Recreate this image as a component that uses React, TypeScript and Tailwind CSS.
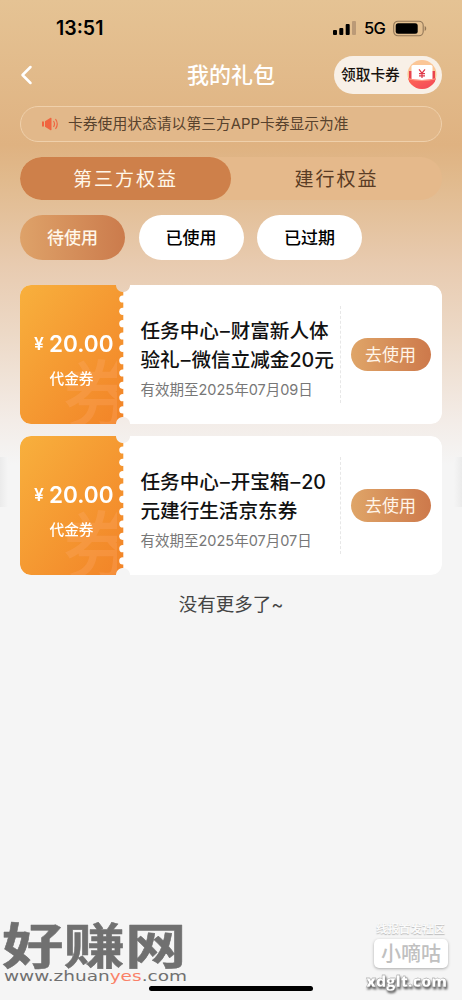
import React from "react";

const coupons = [
  { amount: "20.00", lines: ["任务中心–财富新人体", "验礼–微信立减金20元"], expiry: "有效期至2025年07月09日" },
  { amount: "20.00", lines: ["任务中心–开宝箱–20", "元建行生活京东券"], expiry: "有效期至2025年07月07日" },
];

function StatusBar() {
  return (
    <div className="flex h-[54px] shrink-0 items-center justify-between pl-[56px] pr-[35px] pt-[2px]">
      <span className="pt-[2px] text-[19.5px] font-semibold leading-none text-black">13:51</span>
      <div className="flex items-center">
        <svg width="25" height="16" viewBox="0 0 25 16">
          <rect x="1" y="10" width="4" height="5" rx="1" />
          <rect x="7.3" y="8" width="4" height="7" rx="1" />
          <rect x="13.7" y="4" width="4" height="11" rx="1" />
          <rect x="20" y="1" width="4" height="14" rx="1" fill="#bb9a77" />
        </svg>
        <span className="ml-[7px] w-[22px] whitespace-nowrap text-[16.5px] font-medium leading-none tracking-[-0.6px]">5G</span>
        <svg className="ml-[7px]" width="34" height="17" viewBox="0 0 34 17">
          <rect x="0.7" y="1.2" width="29.5" height="14.6" rx="4.3" fill="none" stroke="#927758" strokeWidth="1.1" />
          <rect x="2.7" y="3.2" width="22" height="10.6" rx="2.5" />
          <path d="M31.7 6v5c2-.7 2-4.3 0-5Z" fill="#927758" />
        </svg>
      </div>
    </div>
  );
}

function PacketIcon() {
  return (
    <svg width="30" height="31" viewBox="0 0 30 31">
      <defs>
        <linearGradient id="packet" x1="0" x2="1" y1="0" y2="1">
          <stop stopColor="#ff6a54" />
          <stop offset="1" stopColor="#f0405a" />
        </linearGradient>
        <clipPath id="packetCircle"><circle cx="15" cy="15.5" r="14.5" /></clipPath>
      </defs>
      <circle cx="15" cy="15.5" r="14.5" fill="#fbc696" />
      <g clipPath="url(#packetCircle)">
        <path d="M2 12h26v12H2Z" fill="#e9434c" />
        <rect x="4.5" y="6" width="21" height="15" rx="1.5" fill="#fff" />
        <path d="M0 19q15 4 30 0v13H0Z" fill="url(#packet)" />
        <path d="M1 19.7q14 3.6 28 0" fill="none" stroke="#ff9b88" strokeWidth="1" />
      </g>
      <path d="m12 10.3 3 3.9 3-3.9M15 14v5M12 14.6h6M12 16.8h6" fill="none" stroke="#df3949" strokeWidth="1.2" />
    </svg>
  );
}

function Header() {
  return (
    <header className="grid h-[41px] shrink-0 grid-cols-[1fr_88px_1fr] items-center px-5">
      <svg width="14" height="20" viewBox="0 0 14 20" fill="none" stroke="white" strokeWidth="2.5" strokeLinecap="round" strokeLinejoin="round">
        <path d="m10.5 2-8 8 8 8" />
      </svg>
      <h1 className="whitespace-nowrap text-center text-[22px] font-medium leading-none text-white">我的礼包</h1>
      <div className="flex h-[38px] w-[108px] items-center justify-self-end rounded-full bg-[#f8f0e7] pl-[7px]">
        <span className="w-[66px] whitespace-nowrap pt-[2px] text-[14.7px] font-medium leading-none text-[#17120e]">领取卡券</span>
        <PacketIcon />
      </div>
    </header>
  );
}

function Notice() {
  return (
    <div className="mx-5 mt-[11px] flex h-[36px] shrink-0 items-center rounded-full border border-[#efd0ab] bg-[#e2b88a] pl-[20px]">
      <svg width="18" height="14" viewBox="0 0 18 14">
        <path d="M1 4.5h2v5H1ZM4 4.3 9.5.8c.7-.4 1 0 1 .6v11.2c0 .6-.3 1-1 .6L4 9.7Z" fill="#f06540" />
        <path d="M12.5 4q2 3 0 6M14.5 2q3.5 5 0 10" fill="none" stroke="#f06540" strokeWidth="1.2" />
      </svg>
      <span className="ml-[9px] whitespace-nowrap pt-px text-[14.8px] leading-none text-[#58422d]">卡券使用状态请以第三方APP卡券显示为准</span>
    </div>
  );
}

function TitleLine({ text }: { text: string }) {
  return (
    <span className="block">
      {text.split("–").map((part, i) => (
        <React.Fragment key={i}>
          {i > 0 && <span className="px-px">–</span>}
          {part}
        </React.Fragment>
      ))}
    </span>
  );
}

function Coupon({ coupon }: { coupon: (typeof coupons)[number] }) {
  return (
    <article className="flex h-[139px] overflow-hidden rounded-[11px] [mask-composite:intersect] [mask-image:radial-gradient(circle_at_103px_0px,transparent_6.5px,black_7.5px),radial-gradient(circle_at_103px_139px,transparent_6.5px,black_7.5px)]">
      <div className="relative flex w-[104px] shrink-0 flex-col items-center bg-white">
        <svg className="absolute inset-0" width="104" height="139" viewBox="0 0 104 139">
          <defs>
            <linearGradient id="ticket" x1="0" x2="1" y1="0" y2="1">
              <stop stopColor="#f8b03d" />
              <stop offset="1" stopColor="#f28327" />
            </linearGradient>
            <clipPath id="ticketFace"><path d="M0 0H97V139H0Z" /></clipPath>
          </defs>
          <path d="M0 0H103.3V139H0Z" fill="url(#ticket)" />
          <g clipPath="url(#ticketFace)">
            <text x="43" y="137" fontSize="74" fontWeight="500" fill="#ffb078" fillOpacity=".24">券</text>
          </g>
          {Array.from({ length: 10 }, (_, i) => (
            <circle key={i} cx="102.8" cy={14 + i * 12.33} r="3.6" fill="white" />
          ))}
        </svg>
        <div className="relative mt-[46px] flex h-[26px] w-full items-center pl-[14px] text-white">
          <span className="w-[15px] text-[17.5px] font-semibold leading-none">¥</span>
          <span className="whitespace-nowrap text-[22.5px] font-semibold leading-none">{coupon.amount}</span>
        </div>
        <span className="relative mt-[15px] whitespace-nowrap pr-[1px] text-[14.7px] font-medium leading-none text-white">代金券</span>
      </div>
      <div className="flex min-w-0 flex-1 items-center bg-white pl-[16.5px] pr-[11.5px]">
        <div className="w-[199px] shrink-0 pt-[8px]">
          <h2 className="whitespace-nowrap text-[19.6px] font-medium leading-[29px] text-[#111]">
            {coupon.lines.map((line) => <TitleLine key={line} text={line} />)}
          </h2>
          <p className="mt-[5px] whitespace-nowrap text-[14.5px] leading-[20px] text-[#777]">{coupon.expiry}</p>
        </div>
        <div className="mr-[10px] h-[97px] w-px border-l border-dashed border-[#e7e7e7]" />
        <button className="h-[33px] w-[80px] shrink-0 whitespace-nowrap rounded-full bg-linear-to-r from-[#dfa568] to-[#cd794b] pt-px text-[17px] leading-none text-[#fff5e9]">去使用</button>
      </div>
    </article>
  );
}

function Watermarks() {
  return (
    <div className="pointer-events-none absolute inset-x-0 bottom-0 h-[90px]">
      <svg className="absolute left-0 top-[8px]" width="192" height="70" viewBox="0 0 192 70" fill="#707070">
        <text transform="translate(2 46) scale(1 .79)" fontFamily="Noto Sans CJK SC" fontWeight="700" fontSize="61.5" stroke="#707070" strokeWidth=".6" strokeLinejoin="round">好赚网</text>
        <text x="4" y="63" textLength="183" lengthAdjust="spacingAndGlyphs" fontFamily="DejaVu Sans" fontSize="14.5">www.zhuan<tspan fill="#fa8168">yes</tspan>.com</text>
      </svg>
      <div className="absolute right-[13px] top-[12px] flex w-[86px] flex-col items-end">
        <span className="mr-[4px] whitespace-nowrap text-[11.5px] font-bold leading-[14px] text-[#fafafa] [text-shadow:0_1px_1px_#bbb]">线报首发社区</span>
        <div className="mr-[1px] mt-[3px] flex h-[29px] w-[74px] items-center justify-center whitespace-nowrap rounded-[5px] bg-white pt-px text-[20px] font-medium leading-none text-[#c0c0c0] shadow-[0_1px_3px_#aaa]">小嘀咕</div>
        <svg className="mt-[5px] block overflow-visible [filter:drop-shadow(1px_2px_1px_#555)]" width="85" height="20" viewBox="0 0 85 20">
          <text x="2" y="14" textLength="81" lengthAdjust="spacingAndGlyphs" fill="white" stroke="#888" strokeWidth=".3" fontFamily="Open Sans" fontWeight="800" fontSize="15">xdglt.com</text>
        </svg>
      </div>
      <div className="absolute bottom-[9px] left-[149px] h-[5px] w-[164px] rounded-full bg-black" />
    </div>
  );
}

export default function App() {
  return (
    <main className="relative flex h-[1000px] w-[462px] flex-col overflow-hidden bg-[linear-gradient(180deg,#e5c394_0px,#dfb281_145px,#e1ba8d_180px,#e8cbb0_265px,#ecd8c5_330px,#f3ece7_420px,#f5f5f5_465px)] font-['Inter','Noto_Sans_CJK_SC',sans-serif]">
      <StatusBar />
      <Header />
      <Notice />
      <div className="mx-5 mt-[15px] grid h-[43px] shrink-0 grid-cols-2 overflow-hidden rounded-full bg-[#e5b98b] text-[19px] leading-none tracking-[2px]">
        <button className="whitespace-nowrap rounded-full bg-[#ce804a] pt-px text-[#fff7e9]">第三方权益</button>
        <button className="whitespace-nowrap pt-px text-[#5a3c24]">建行权益</button>
      </div>
      <div className="ml-5 mt-[15px] flex h-[45px] shrink-0 gap-[13.5px] text-[17px] font-medium leading-none">
        <button className="w-[105px] whitespace-nowrap rounded-full bg-linear-to-r from-[#dea269] to-[#cb7b4c] pt-px text-[#fff7e9]">待使用</button>
        <button className="w-[105px] whitespace-nowrap rounded-full bg-white pt-px">已使用</button>
        <button className="w-[105px] whitespace-nowrap rounded-full bg-white pt-px">已过期</button>
      </div>
      <div className="mx-5 mt-[25px] flex shrink-0 flex-col gap-[12px]">
        {coupons.map((coupon) => <Coupon key={coupon.expiry} coupon={coupon} />)}
      </div>
      <p className="mt-[19px] text-center text-[18.5px] leading-[20px] text-[#444]">没有更多了~</p>
      <div className="absolute left-0 top-[457px] h-[50px] w-[8px] bg-linear-to-r from-[#ebebeb] to-[#f5f5f5]" />
      <div className="absolute right-0 top-[457px] h-[50px] w-[8px] bg-linear-to-l from-[#ebebeb] to-[#f5f5f5]" />
      <Watermarks />
    </main>
  );
}
